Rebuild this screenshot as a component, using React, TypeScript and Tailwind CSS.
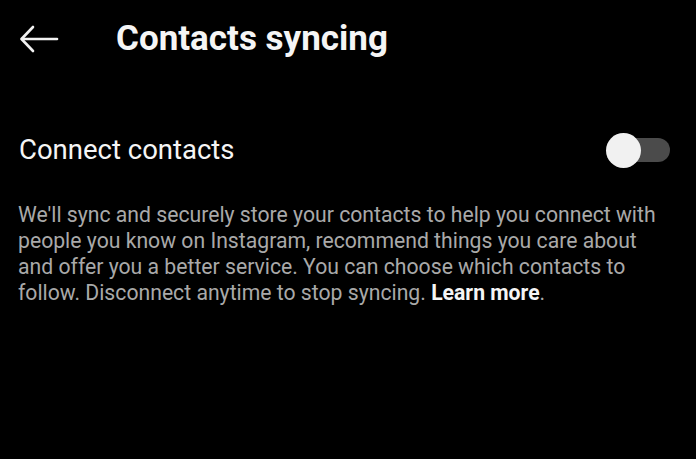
import React from 'react';

const BackArrow: React.FC = () => (
  <svg width="40" height="28" viewBox="0 0 40 28" fill="none" stroke="#f2f2f2" strokeWidth="2.6" strokeLinecap="round" strokeLinejoin="round">
    <path d="M38 14H3" />
    <path d="M14 2L2.5 14L14 26" />
  </svg>
);

const Toggle: React.FC = () => (
  <div className="relative w-[64px] h-[36px] flex items-center">
    <div className="absolute left-[4px] right-0 h-[24px] rounded-full bg-[#4b4b4b]" />
    <div className="absolute left-0 w-[35px] h-[35px] rounded-full bg-[#f1f1f1]" />
  </div>
);

export default function App() {
  return (
    <div className="w-[696px] h-[459px] bg-black text-[#f5f5f5] font-['Roboto',sans-serif] overflow-hidden">
      <div className="flex items-center h-[78px] pl-[19px]">
        <BackArrow />
        <h1 className="ml-[57px] text-[35px] font-bold">Contacts syncing</h1>
      </div>
      <div className="flex items-center justify-between pl-[19px] pr-[26px] mt-[52px] h-[40px]">
        <span className="text-[27.5px]">Connect contacts</span>
        <Toggle />
      </div>
      <p className="pl-[18px] pr-[30px] mt-[32px] text-[21.2px] leading-[26px] text-[#a9a9a9]">
        We'll sync and securely store your contacts to help you connect with people you know on Instagram, recommend things you care about and offer you a better service. You can choose which contacts to follow. Disconnect anytime to stop syncing.{' '}
        <span className="font-bold text-[#f5f5f5]">Learn more</span>.
      </p>
    </div>
  );
}
